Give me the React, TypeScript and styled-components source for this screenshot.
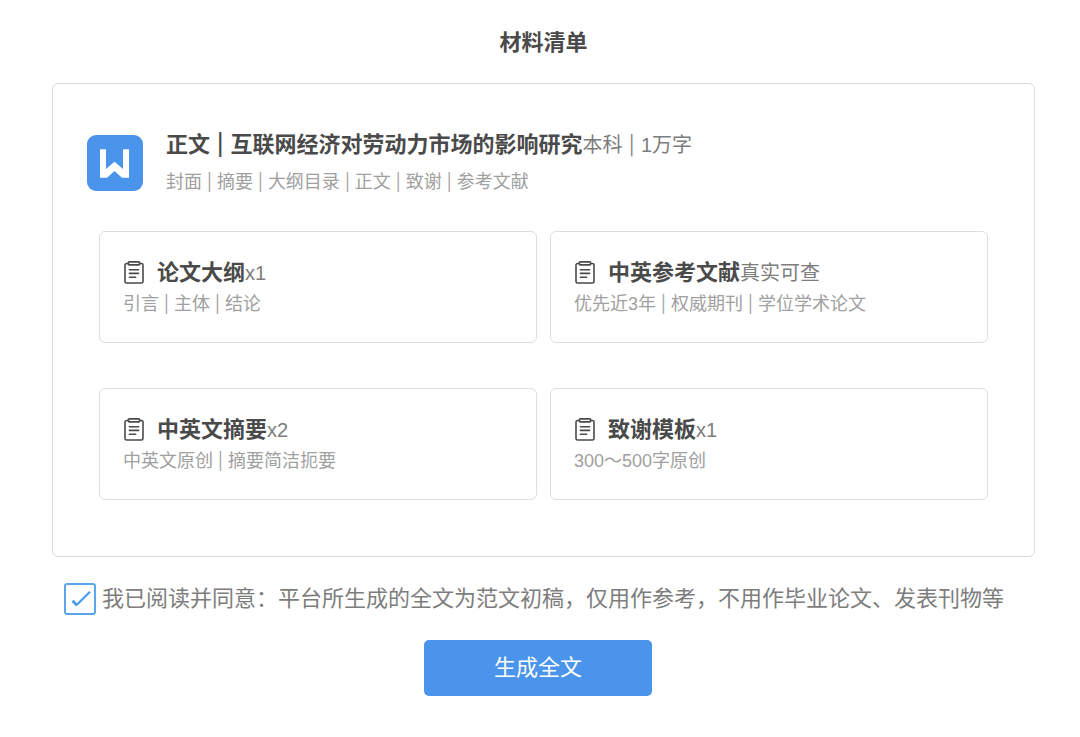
import { useState } from 'react';
import styled, { createGlobalStyle } from 'styled-components';

const GlobalStyle = createGlobalStyle`
  * { box-sizing: border-box; }
  body {
    margin: 0;
    background: #fff;
    color: #4a4a4a;
    font-family: "Liberation Sans", "Noto Sans CJK SC", sans-serif;
  }
`;

const Page = styled.main`
  padding: 27px 45px 40px 52px;
`;

const PageTitle = styled.h1`
  margin: 0 0 24px;
  font-size: 22px;
  line-height: 32px;
  font-weight: 700;
  text-align: center;
`;

const Panel = styled.section`
  padding: 45px 46px 56px;
  border: 1px solid #dcdcdc;
  border-radius: 6px;
`;

const PaperHeader = styled.header`
  display: flex;
  align-items: center;
  gap: 23px;
  margin: 0 0 34px -12px;
`;

const Logo = styled.svg`
  flex: none;
  width: 56px;
  height: 56px;
`;

const Heading = styled.h2`
  margin: 0;
  font-size: 22px;
  line-height: 32px;
  font-weight: 700;
`;

const Extra = styled.span`
  color: #7d7d7d;
  font-size: 20px;
  font-weight: 400;
  line-height: 1;
`;

const Bar = styled.span<{ $pad: number }>`
  padding: 0 ${(p) => p.$pad}px;
  font-family: "Noto Sans CJK SC", sans-serif;
  line-height: 1;
  vertical-align: 1px;
`;

const Detail = styled.p<{ $gap: number }>`
  margin: ${(p) => p.$gap}px 0 0;
  color: #a0a0a0;
  font-size: 18px;
  line-height: 30px;
`;

const Grid = styled.ul`
  display: grid;
  grid-template-columns: 1fr 1fr;
  gap: 45px 13px;
  margin: 0;
  padding: 0;
  list-style: none;
`;

const Card = styled.li`
  padding: 25px 23px 23px;
  border: 1px solid #dedede;
  border-radius: 6px;
`;

const CardTop = styled.div`
  display: flex;
  align-items: center;
  gap: 12px;
`;

const ClipIcon = styled.svg`
  flex: none;
  width: 22px;
  height: 24px;
`;

const Agreement = styled.label`
  display: flex;
  align-items: center;
  gap: 6px;
  margin: 25px 0 0 12px;
  color: #7d7d7d;
  font-size: 22px;
  line-height: 34px;
`;

const CheckBoxWrap = styled.span`
  display: grid;
  flex: none;
  > * { grid-area: 1 / 1; }
`;

const Checkbox = styled.input`
  appearance: none;
  width: 32px;
  height: 32px;
  margin: 0;
  border: 2px solid #5aa6ea;
  border-radius: 3px;
  background: #fff;
`;

const Tick = styled.svg`
  width: 32px;
  height: 32px;
  pointer-events: none;
`;

const Actions = styled.div`
  padding-right: 11px;
`;

const Submit = styled.button`
  display: block;
  width: 228px;
  margin: 24px auto 0;
  padding: 12px 0;
  border: 0;
  border-radius: 5px;
  background: #4a94ec;
  color: #fff;
  font: inherit;
  font-size: 22px;
  line-height: 32px;
  cursor: pointer;
`;

function Parts({ items, pad = 1 }: { items: string[]; pad?: number }) {
  return (
    <>
      {items.map((item, i) => (
        <span key={item}>
          {i > 0 && <Bar $pad={pad}> | </Bar>}
          {item}
        </span>
      ))}
    </>
  );
}

function Clipboard() {
  return (
    <ClipIcon viewBox="0 0 22 24" fill="none" stroke="#4a4a4a" strokeWidth="1.6" strokeLinecap="round" aria-hidden="true">
      <path d="M5.500 2.500H3.600A1.600 1.600 0 0 0 2 4.100v16.300a1.600 1.600 0 0 0 1.600 1.600h14.800a1.600 1.600 0 0 0 1.600-1.600V4.100a1.600 1.600 0 0 0-1.600-1.600H16.500" />
      <rect x="5.300" y="0.900" width="11.400" height="3" rx="1" />
      <path d="M6.400 8.700h9.200M6.400 12.400h9.200M6.400 16.200h6.200" />
    </ClipIcon>
  );
}

const materials = [
  { title: '论文大纲', extra: 'x1', parts: ['引言', '主体', '结论'] },
  { title: '中英参考文献', extra: '真实可查', parts: ['优先近3年', '权威期刊', '学位学术论文'] },
  { title: '中英文摘要', extra: 'x2', parts: ['中英文原创', '摘要简洁扼要'] },
  { title: '致谢模板', extra: 'x1', parts: ['300～500字原创'] },
];

export default function App() {
  const [agreed, setAgreed] = useState(true);
  return (
    <Page lang="zh-CN">
      <GlobalStyle />
      <PageTitle>材料清单</PageTitle>
      <Panel>
        <PaperHeader>
          <Logo viewBox="0 0 56 56" aria-hidden="true">
            <rect width="56" height="56" rx="9" fill="#4a94ec" />
            <path d="M13 14.300h6V34l8.500-7.300L36 34V14.300h6v28.400h-7L27.500 36 20 42.700h-7z" fill="#fff" />
          </Logo>
          <div>
            <Heading>
              <Parts pad={2} items={['正文', '互联网经济对劳动力市场的影响研究']} />
              <Extra><Parts pad={2} items={['本科', '1万字']} /></Extra>
            </Heading>
            <Detail $gap={6}>
              <Parts items={['封面', '摘要', '大纲目录', '正文', '致谢', '参考文献']} />
            </Detail>
          </div>
        </PaperHeader>
        <Grid>
          {materials.map((m) => (
            <Card key={m.title}>
              <CardTop>
                <Clipboard />
                <Heading as="h3">{m.title}<Extra>{m.extra}</Extra></Heading>
              </CardTop>
              <Detail $gap={0}><Parts items={m.parts} /></Detail>
            </Card>
          ))}
        </Grid>
      </Panel>
      <Agreement>
        <CheckBoxWrap>
          <Checkbox type="checkbox" checked={agreed} onChange={(e) => setAgreed(e.target.checked)} />
          {agreed && (
            <Tick viewBox="0 0 32 32" fill="none" stroke="#4a9be8" aria-hidden="true">
              <path d="M8.500 17.800l4.500 4.400" strokeWidth="3" />
              <path d="M12.300 22.300L26 8.800" strokeWidth="2.200" />
            </Tick>
          )}
        </CheckBoxWrap>
        <span>我已阅读并同意：平台所生成的全文为范文初稿，仅用作参考，不用作毕业论文、发表刊物等</span>
      </Agreement>
      <Actions>
        <Submit type="button">生成全文</Submit>
      </Actions>
    </Page>
  );
}
